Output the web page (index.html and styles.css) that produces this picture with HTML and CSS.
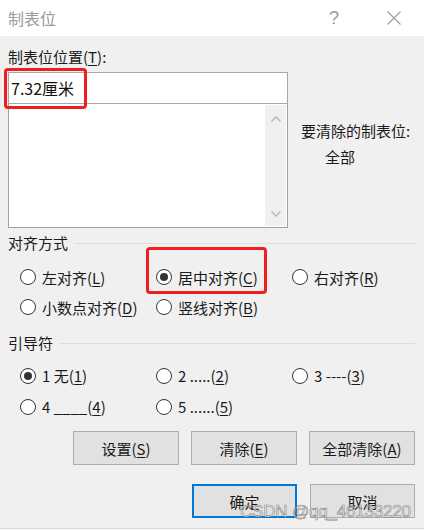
FILE: index.html
```html
<!DOCTYPE html>
<html lang="zh-CN">
<head>
    <meta charset="UTF-8">
    <meta name="viewport" content="width=device-width, initial-scale=1.0">
    <title>制表位</title>
    <link rel="stylesheet" href="styles.css">
</head>
<body>
    <div class="dialog">
        <div class="titlebar">
            <span class="title">制表位</span>
            <span class="tb-btn help">?</span>
            <span class="tb-btn close">
                <svg width="16" height="16" viewBox="0 0 16 16"><path d="M1.5 1.5 L14.5 14.5 M14.5 1.5 L1.5 14.5" stroke="#9a9a9a" stroke-width="1.1" fill="none"/></svg>
            </span>
        </div>

        <div class="content">
            <div class="field-label">制表位位置(<u>T</u>):</div>
            <div class="top-row">
                <div class="left-col">
                    <div class="pos-input">
                        7.32厘米
                        <span class="mark mark-input"></span>
                    </div>
                    <div class="listbox">
                        <div class="scrollbar">
                            <svg width="12" height="8" viewBox="0 0 12 8"><path d="M1.5 6.5 L6 2 L10.5 6.5" stroke="#bdbdbd" stroke-width="1.6" fill="none"/></svg>
                            <svg width="12" height="8" viewBox="0 0 12 8"><path d="M1.5 1.5 L6 6 L10.5 1.5" stroke="#bdbdbd" stroke-width="1.6" fill="none"/></svg>
                        </div>
                    </div>
                </div>
                <div class="right-col">
                    <div>要清除的制表位:</div>
                    <div class="clear-value">全部</div>
                </div>
            </div>

            <div class="group-title"><span>对齐方式</span><i></i></div>
            <div class="radio-grid">
                <label class="radio"><span class="dot"></span>左对齐(<u>L</u>)</label>
                <label class="radio checked"><span class="dot"></span>居中对齐(<u>C</u>)<span class="mark mark-radio"></span></label>
                <label class="radio"><span class="dot"></span>右对齐(<u>R</u>)</label>
                <label class="radio"><span class="dot"></span>小数点对齐(<u>D</u>)</label>
                <label class="radio"><span class="dot"></span>竖线对齐(<u>B</u>)</label>
            </div>

            <div class="group-title second"><span>引导符</span><i></i></div>
            <div class="radio-grid leader">
                <label class="radio checked"><span class="dot"></span>1 无(<u>1</u>)</label>
                <label class="radio"><span class="dot"></span>2 .....(<u>2</u>)</label>
                <label class="radio"><span class="dot"></span>3 ----(<u>3</u>)</label>
                <label class="radio"><span class="dot"></span>4 ____(<u>4</u>)</label>
                <label class="radio"><span class="dot"></span>5 ......(<u>5</u>)</label>
            </div>

            <div class="buttons">
                <button>设置(<u>S</u>)</button>
                <button>清除(<u>E</u>)</button>
                <button>全部清除(<u>A</u>)</button>
            </div>
            <div class="buttons footer">
                <button class="default">确定</button>
                <button>取消</button>
            </div>
        </div>

        <div class="watermark">CSDN @qq_46133220</div>
    </div>
</body>
</html>
```

FILE: styles.css
```css
* {
    box-sizing: border-box;
}
body {
    margin: 0;
    font-family: "Noto Sans CJK SC", "Liberation Sans", sans-serif;
    font-size: 15px;
    color: #1a1a1a;
    background-color: #f8f8f8;
}
u {
    text-decoration-thickness: 1px;
    text-underline-offset: 2px;
}
.dialog {
    position: relative;
    width: 424px;
    height: 529px;
    background-color: #f0f0f0;
    border-bottom: 1px solid #dadada;
    overflow: hidden;
}
.titlebar {
    display: flex;
    align-items: center;
    height: 36px;
    background-color: #fff;
    padding-left: 8px;
}
.title {
    flex: 1;
    font-size: 16px;
    color: #9a9a9a;
    line-height: 20px;
}
.tb-btn {
    display: flex;
    justify-content: center;
    align-items: center;
    width: 60px;
    height: 36px;
    color: #9a9a9a;
}
.help {
    font-family: "Liberation Sans", sans-serif;
    font-size: 18px;
}
.content {
    padding: 0 9px 0 8px;
}
.field-label {
    margin-top: 11px;
    line-height: 20px;
}
.top-row {
    display: flex;
    margin-top: 5px;
}
.left-col {
    width: 280px;
}
.pos-input {
    position: relative;
    height: 32px;
    line-height: 30px;
    padding-left: 2px;
    font-size: 16px;
    color: #111;
    background-color: #fff;
    border: 1px solid #a8a8a8;
}
.listbox {
    display: flex;
    justify-content: flex-end;
    height: 125px;
    margin-top: -1px;
    padding: 1px;
    background-color: #fff;
    border: 1px solid #a0a0a0;
}
.scrollbar {
    display: flex;
    flex-direction: column;
    justify-content: space-between;
    align-items: center;
    width: 21px;
    padding: 10px 0 8px;
    background-color: #f0f0f0;
}
.right-col {
    margin: 49px 0 0 13px;
    line-height: 20px;
}
.clear-value {
    margin: 6px 0 0 24px;
}
.group-title {
    display: flex;
    align-items: center;
    margin-top: 5px;
    line-height: 20px;
}
.group-title i {
    flex: 1;
    height: 1px;
    margin-left: 6px;
    background-color: #dcdcdc;
}
.group-title.second {
    margin-top: 11px;
}
.radio-grid {
    display: grid;
    grid-template-columns: 136px 136px auto;
    grid-auto-rows: 30px;
    margin-top: 9px;
    padding-left: 12px;
}
.radio-grid.leader {
    grid-auto-rows: 31px;
    margin-top: 7px;
}
.radio {
    position: relative;
    display: flex;
    align-items: center;
    white-space: nowrap;
}
.dot {
    display: flex;
    justify-content: center;
    align-items: center;
    width: 16px;
    height: 16px;
    margin-right: 6px;
    border: 1px solid #333;
    border-radius: 50%;
    background-color: #fff;
}
.checked .dot::after {
    content: "";
    width: 8px;
    height: 8px;
    border-radius: 50%;
    background-color: #333;
}
.mark {
    position: absolute;
    border: 3px solid #f01e1e;
    border-radius: 4px;
    pointer-events: none;
}
.mark-input {
    left: -5px;
    top: -5px;
    width: 83px;
    height: 41px;
}
.mark-radio {
    left: -10px;
    top: -15px;
    width: 121px;
    height: 47px;
}
.buttons {
    display: flex;
    justify-content: flex-end;
    gap: 12px;
    margin-top: 9px;
}
.buttons button {
    width: 106px;
    height: 34px;
    font-family: inherit;
    font-size: 15px;
    color: #1a1a1a;
    background-color: #e1e1e1;
    border: 1px solid #adadad;
    padding: 0;
}
.buttons.footer {
    gap: 13px;
    margin-top: 19px;
}
.buttons.footer button {
    width: 105px;
}
.buttons button.default {
    border: 2px solid #0078d7;
}
.watermark {
    position: absolute;
    left: 240px;
    top: 502px;
    font-family: "Liberation Sans", sans-serif;
    font-size: 17px;
    letter-spacing: -0.2px;
    color: rgba(255, 255, 255, 0.65);
    -webkit-text-stroke: 0.6px rgba(90, 90, 90, 0.75);
}
```
